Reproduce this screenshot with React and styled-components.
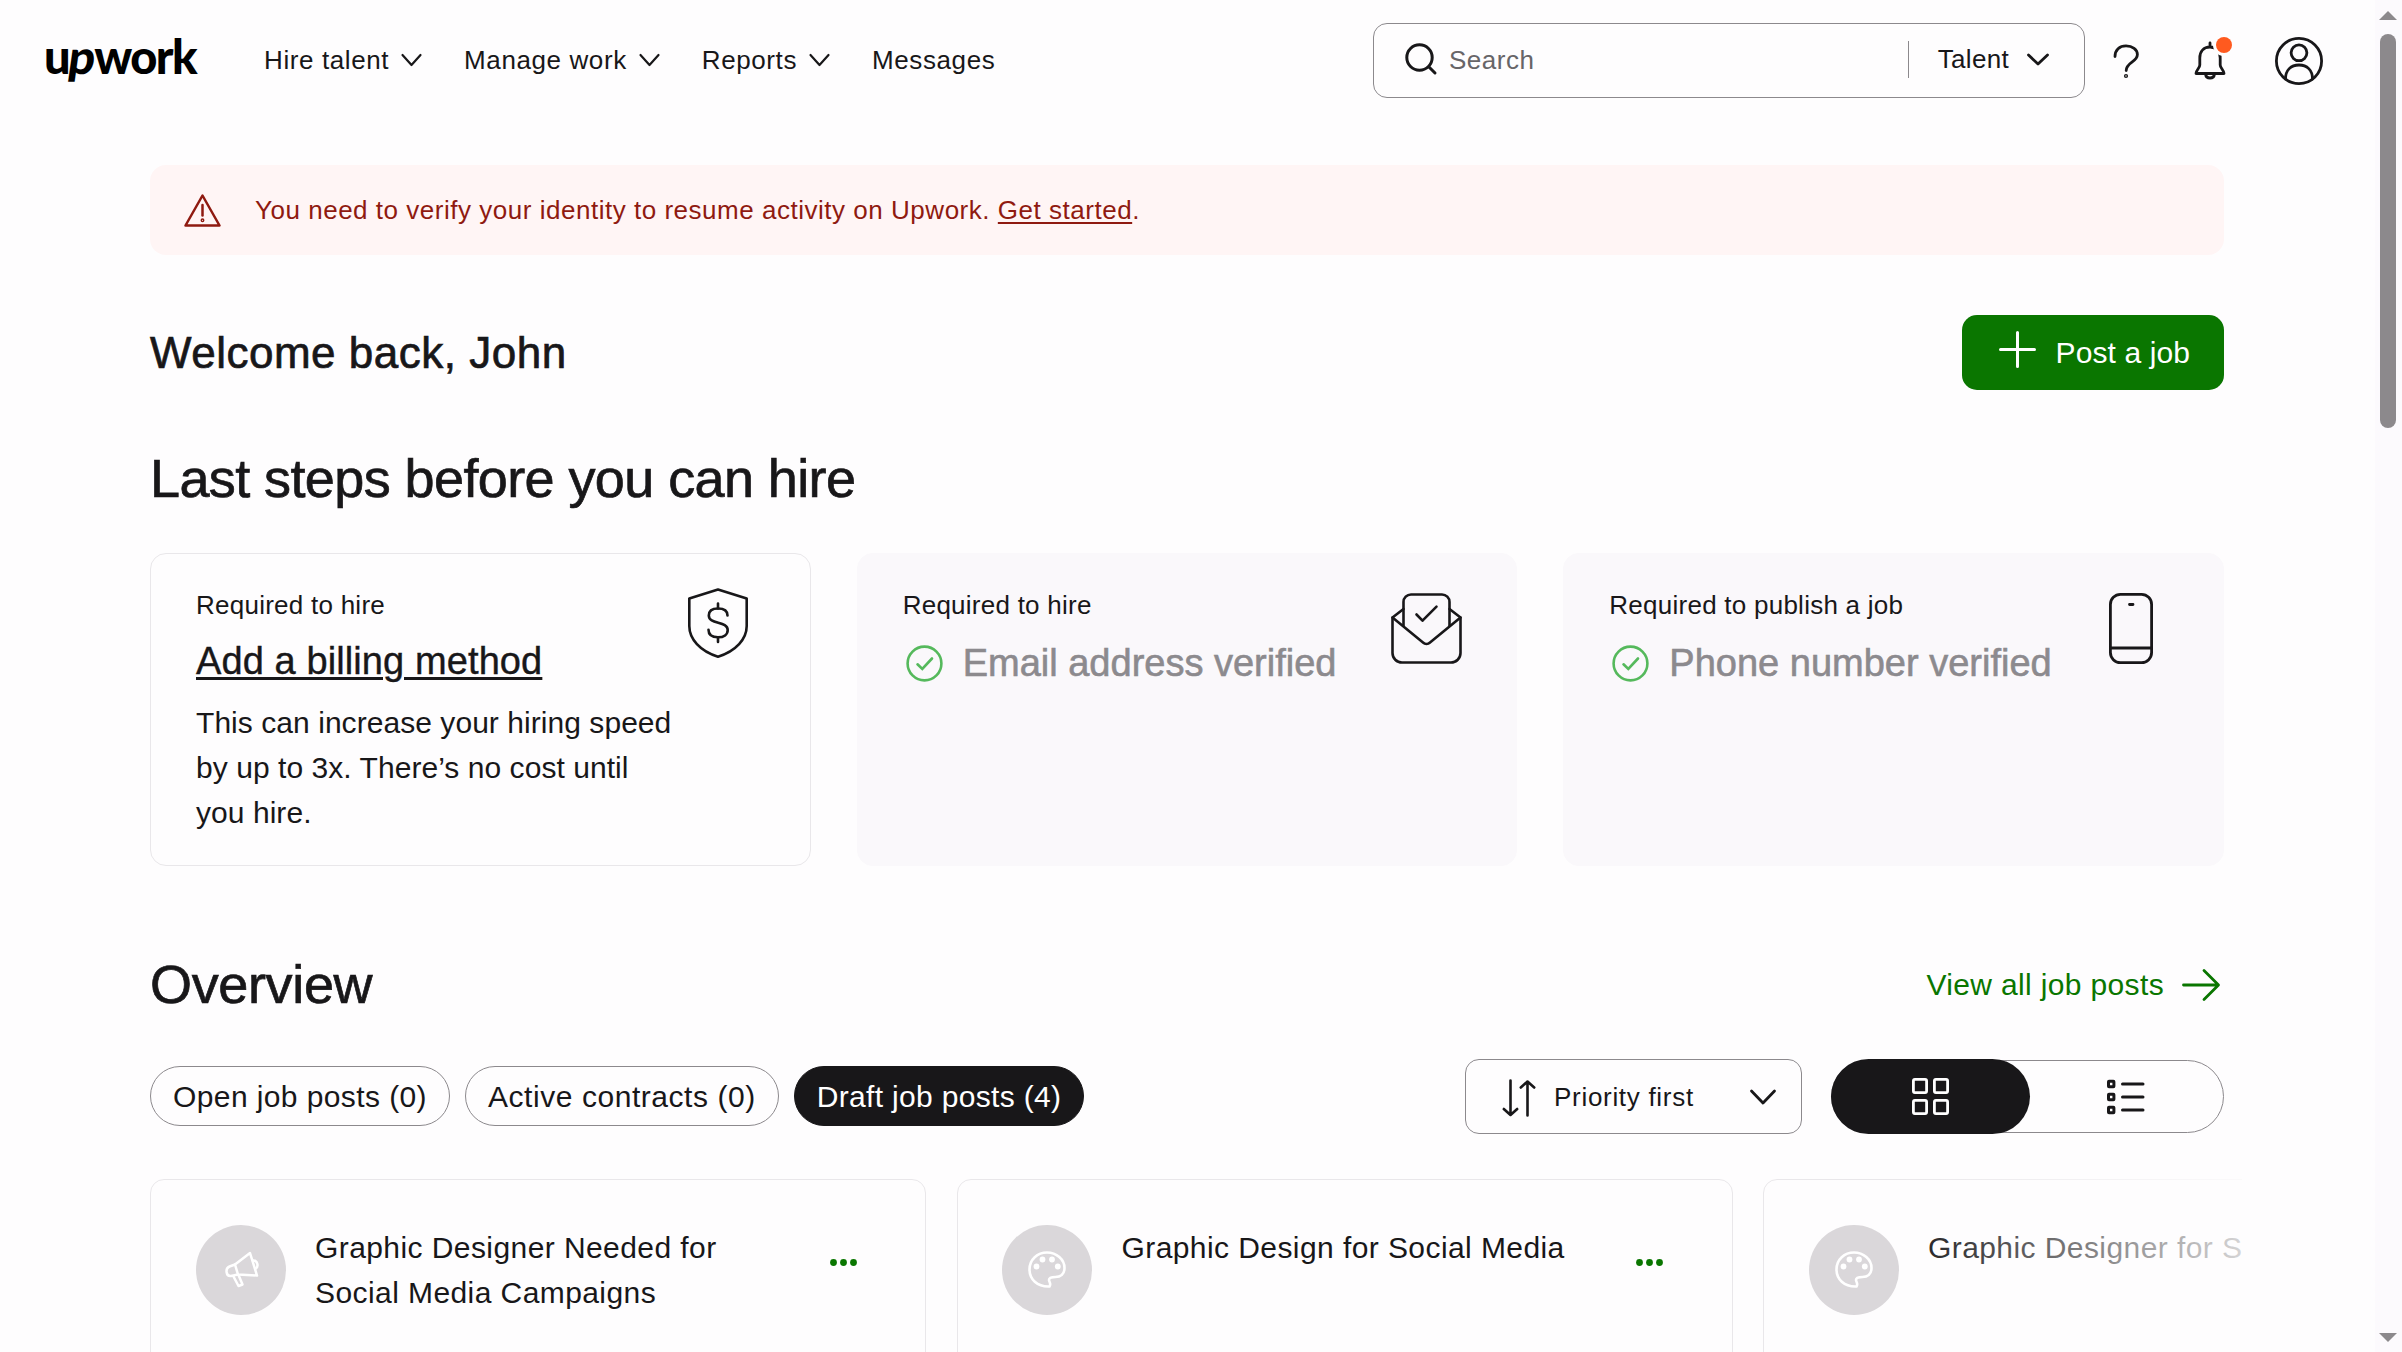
import React from "react"
import styled, { createGlobalStyle, css } from "styled-components"

const ink = "#181719"
const green = "#0a7600"
const red = "#8f1a10"
const line = "#8c898d"
const softLine = "#e9e7ea"

const GlobalStyle = createGlobalStyle`
  * {
    box-sizing: border-box;
  }
  html, body {
    margin: 0;
    height: 1352px;
    overflow: hidden;
  }
  body {
    background: #fefdfe;
    color: ${ink};
    font-family: "Liberation Sans", Arial, sans-serif;
    font-size: 26px;
  }
  button {
    font: inherit;
    color: inherit;
    background: none;
    border: 0;
    padding: 0;
  }
  a {
    color: inherit;
  }
  svg {
    display: block;
    flex: none;
    overflow: visible;
  }
`

const Shell = styled.div`
  display: flex;
  height: 1352px;
  overflow: hidden;
`

const Page = styled.div`
  flex: 1;
  min-width: 0;
`

const ScrollTrack = styled.div`
  width: 27px;
  background: #fcfafd;
  display: flex;
  flex-direction: column;
  align-items: center;
  padding: 11px 1px 10px 0;
`

const ScrollThumb = styled.div`
  width: 16px;
  height: 394px;
  margin-top: 14px;
  margin-bottom: auto;
  border-radius: 8px;
  background: #8c898c;
`

/* Header */

const Header = styled.header`
  height: 121px;
  padding: 0 52px 0 44px;
  display: flex;
  align-items: center;
`

const Logo = styled.a`
  width: 220px;
  height: 62px;
  font-family: Lato, "Liberation Sans", sans-serif;
  font-weight: 900;
  font-size: 47px;
  line-height: 53px;
  letter-spacing: -1.6px;
  color: #000;
  text-decoration: none;
`

const LogoSlant = styled.span`
  display: inline-block;
  transform: skewX(-8deg);
`

const Nav = styled.nav`
  display: flex;
  align-items: center;
  gap: 42px;
  padding-bottom: 2px;
  letter-spacing: 0.6px;
`

const NavItem = styled.div`
  display: flex;
  align-items: center;
  gap: 12px;
  line-height: 40px;
`

const SearchBox = styled.div`
  width: 712px;
  height: 75px;
  margin-left: auto;
  padding: 0 35px 0 31px;
  border: 1.5px solid ${line};
  border-radius: 14px;
  display: flex;
  align-items: center;

  > svg {
    margin-bottom: 3px;
  }
`

const SearchHint = styled.span`
  flex: 1;
  padding-left: 12px;
  color: #676568;
  letter-spacing: 0.5px;
`

const SearchScope = styled.div`
  height: 37px;
  margin-bottom: 3px;
  padding-left: 29px;
  border-left: 1.5px solid ${line};
  display: flex;
  align-items: center;
  gap: 18px;
  letter-spacing: 0.3px;
`

const HeaderIcons = styled.div`
  display: flex;
  align-items: center;
  padding-left: 28px;
`

const BellWrap = styled.div`
  position: relative;
  margin: 0 49px 0 55px;
`

const Badge = styled.span`
  position: absolute;
  top: -6px;
  right: -6px;
  width: 16px;
  height: 16px;
  border-radius: 50%;
  background: #ff5a1f;
  box-shadow: 0 0 0 3px #fefdfe;
`

/* Main column */

const Main = styled.main`
  padding: 44px 151px 0 150px;
`

const Alert = styled.div`
  height: 90px;
  padding-left: 34px;
  border-radius: 16px;
  background: #fff5f5;
  color: ${red};
  display: flex;
  align-items: center;
  gap: 34px;
  letter-spacing: 0.52px;

  a {
    text-decoration-thickness: 2px;
    text-underline-offset: 3px;
  }
`

const SplitRow = styled.div`
  display: flex;
  align-items: center;
  justify-content: space-between;
  margin-top: ${({ $top }) => $top}px;
`

const Welcome = styled.h1`
  margin: 0;
  font-size: 44px;
  font-weight: 400;
  letter-spacing: 0.5px;
  -webkit-text-stroke: 0.7px currentColor;
`

const PostButton = styled.button`
  height: 75px;
  padding: 0 34px 0 37px;
  border-radius: 15px;
  background: ${green};
  color: #fff;
  font-size: 30px;
  letter-spacing: 0.1px;
  display: flex;
  align-items: center;
  gap: 20px;

  svg {
    margin-bottom: 6px;
  }
`

const SectionTitle = styled.h2`
  margin: 0;
  font-size: 54px;
  font-weight: 400;
  line-height: 60px;
  letter-spacing: ${({ $tracking = 0 }) => $tracking}px;
  -webkit-text-stroke: 0.7px currentColor;
`

const StepsTitle = styled(SectionTitle)`
  margin-top: 58px;
`

const Steps = styled.div`
  margin-top: 45px;
  display: grid;
  grid-template-columns: repeat(3, minmax(0, 1fr));
  gap: 46px;
`

const Step = styled.section`
  height: 313px;
  padding: 32px 46px 0 45px;
  border: 1.5px solid ${softLine};
  border-radius: 16px;
  display: flex;
  justify-content: space-between;

  ${({ $done }) =>
    $done &&
    css`
      background: #faf8fb;
      border-color: #faf8fb;
    `}
`

const StepIcon = styled.div`
  width: ${({ $width = 92 }) => $width}px;
  margin-left: -20px;
  padding-top: ${({ $top }) => $top}px;
  flex: none;
  display: flex;
  justify-content: center;
  align-items: flex-start;
`

const StepBody = styled.div`
  white-space: nowrap;
`

const StepCaption = styled.div`
  line-height: 39px;
  letter-spacing: 0.25px;
`

const StepLink = styled.a`
  display: block;
  margin-top: 12px;
  font-size: 38px;
  line-height: 48px;
  letter-spacing: 0.1px;
  text-decoration: underline;
  text-decoration-thickness: 3px;
  text-underline-offset: 3px;
  -webkit-text-stroke: 0.4px currentColor;
`

const StepText = styled.p`
  width: 480px;
  margin: 15px 0 0;
  font-size: 30px;
  line-height: 45px;
  letter-spacing: 0.05px;
  white-space: normal;
`

const StepDone = styled.div`
  margin: 14px 0 0 3px;
  font-size: 38px;
  line-height: 48px;
  color: #8c8a8e;
  display: flex;
  align-items: center;
  gap: 20px;
  -webkit-text-stroke: 0.6px currentColor;
`

const ViewAll = styled.a`
  display: flex;
  align-items: center;
  gap: 18px;
  padding: 2px 4px 0 0;
  color: ${green};
  font-size: 30px;
  letter-spacing: 0.35px;
`

const Filters = styled.div`
  display: flex;
  gap: 15px;
  margin-bottom: 1px;
`

const Pill = styled.button`
  height: 60px;
  padding: 1px 22px 0;
  border: 1.5px solid ${line};
  border-radius: 30px;
  font-size: 30px;
  letter-spacing: ${({ $tracking }) => $tracking}px;

  ${({ $active }) =>
    $active &&
    css`
      background: ${ink};
      border-color: ${ink};
      color: #fff;
    `}
`

const Controls = styled.div`
  display: flex;
  align-items: center;
  gap: 29px;
`

const SortSelect = styled.div`
  width: 337px;
  height: 75px;
  padding: 0 25px 0 36px;
  border: 1.5px solid ${line};
  border-radius: 14px;
  display: flex;
  align-items: center;
  letter-spacing: 0.7px;
`

const SortLabel = styled.span`
  flex: 1;
  padding: 1px 0 0 18px;
`

const Toggle = styled.div`
  width: 393px;
  height: 73px;
  border: 1.5px solid ${line};
  border-radius: 37px;
  display: flex;
  align-items: center;
`

const ToggleSide = styled.div`
  flex: 1;
  height: 75px;
  display: flex;
  align-items: center;
  justify-content: center;

  ${({ $active }) =>
    $active &&
    css`
      flex: none;
      width: 199px;
      margin-left: -1.5px;
      border-radius: 38px;
      background: ${ink};
      color: #fff;
    `}
`

const Jobs = styled.div`
  position: relative;
  margin: 45px -18px 0 0;
  height: 173px;
  overflow: hidden;
  display: flex;
  gap: 30.5px;
`

const JobsFade = styled.div`
  position: absolute;
  top: 0;
  right: 0;
  width: 347px;
  height: 100%;
  background: linear-gradient(
    to right,
    rgba(254, 253, 254, 0),
    rgba(254, 253, 254, 0.82)
  );
`

const JobCard = styled.article`
  flex: none;
  width: 776px;
  height: 300px;
  padding: 44.5px;
  border: 1.5px solid ${softLine};
  border-radius: 14px;
  display: flex;
  align-items: flex-start;
`

const JobIcon = styled.div`
  width: 90px;
  height: 90px;
  flex: none;
  border-radius: 50%;
  background: #dad7da;
  color: #fff;
  display: flex;
  align-items: center;
  justify-content: center;
`

const JobTitle = styled.div`
  max-width: 470px;
  margin-left: 29.5px;
  font-size: 30px;
  line-height: 45px;
  letter-spacing: 0.42px;
`

const MoreButton = styled.button`
  margin: 34px 24px 0 auto;
  color: ${green};
`

/* Icons */

const Stroke = ({ w, h, size = 2.6, children }) => (
  <svg
    width={w}
    height={h}
    viewBox={`0 0 ${w} ${h}`}
    fill="none"
    stroke="currentColor"
    strokeWidth={size}
    strokeLinecap="round"
    strokeLinejoin="round"
  >
    {children}
  </svg>
)

const Chevron = ({ w = 22, h = 12, size = 2.2 }) => (
  <Stroke w={w} h={h} size={size}>
    <path d={`M1.500 1 L${w / 2} ${h - 1} L${w - 1.5} 1`} />
  </Stroke>
)

const SearchIcon = () => (
  <Stroke w={32} h={32} size={3}>
    <circle cx="14.500" cy="14.500" r="12.700" />
    <path d="M24 24l6 6" />
  </Stroke>
)

const HelpIcon = () => (
  <Stroke w={26} h={34} size={2.8}>
    <path d="M2 12.500C2 6 6.500 1.900 13 1.900S24.400 5.500 24.400 10.500C24.400 18 13.200 18.500 13.200 26.500" />
    <circle cx="13" cy="32" r="0.700" />
  </Stroke>
)

const BellIcon = () => (
  <Stroke w={32} h={36} size={2.8}>
    <path d="M16 0v3M16 4C9.500 4 5.800 8.500 5.800 15v7c0 3-3.300 4.500-3.800 8.500h28c-.5-4-3.800-5.500-3.800-8.500v-7C26.200 8.500 22.500 4 16 4z" />
    <path d="M11.500 31c.3 2.500 2 4 4.500 4s4.200-1.500 4.500-4" />
  </Stroke>
)

const AvatarIcon = () => (
  <Stroke w={48} h={48} size={2.8}>
    <circle cx="24" cy="24" r="22.600" />
    <circle cx="24" cy="15.800" r="7.900" />
    <path d="M10.500 42c0-9 5.500-14 13.500-14S37.500 33 37.500 42" />
  </Stroke>
)

const WarningIcon = () => (
  <Stroke w={37} h={34} size={2.5}>
    <path d="M18.500 2.500L35.500 32.500H1.500z" />
    <path d="M18.500 12v10.500" />
    <circle cx="18.500" cy="27.200" r="0.700" />
  </Stroke>
)

const PlusIcon = () => (
  <Stroke w={37} h={37} size={3}>
    <path d="M18.500 1.500v34M1.500 18.500h34" />
  </Stroke>
)

const ShieldIcon = () => (
  <Stroke w={60} h={70}>
    <path d="M30 1.500L58.700 10.500V38C58.700 51 48 63 30 68.700C12 63 1.300 51 1.300 38V10.500z" />
    <path d="M39.500 27.500C39.500 23 36 20.500 30 20.500S20.800 23.200 20.800 27.600C20.800 37 39.700 32.500 39.700 42C39.700 46.500 36 49.300 30 49.300S20.500 46.500 20.500 41.800" />
    <path d="M30 15.500v5M30 49.500v4.500" />
  </Stroke>
)

const MailIcon = () => (
  <Stroke w={71} h={71}>
    <path d="M12.500 33V9a7.500 7.500 0 0 1 7.500-7.500h31A7.500 7.500 0 0 1 58.500 9v24" />
    <path d="M12.500 16L1.500 24.500V60A9.500 9.500 0 0 0 11 69.500h49a9.500 9.500 0 0 0 9.500-9.500V24.500L58.500 16" />
    <path d="M1.500 24.500l30.500 25a5 5 0 0 0 7 0l30.500-25" />
    <path d="M25.500 21.500l6 6.200 14-14" />
  </Stroke>
)

const PhoneIcon = () => (
  <Stroke w={44} h={71} size={2.8}>
    <rect x="1.400" y="1.400" width="41.200" height="68.200" rx="10" />
    <path d="M1.400 55h41.200M20.500 11.500h3.500" />
  </Stroke>
)

const CheckIcon = () => (
  <svg width="37" height="37" viewBox="0 0 37 37" fill="none" stroke="#55b95c" strokeWidth="2.6">
    <circle cx="18.500" cy="18.500" r="16.900" />
    <path d="M11.500 19.300l4.800 4.700 9.700-10.500" strokeLinecap="round" />
  </svg>
)

const ArrowIcon = () => (
  <Stroke w={38} h={32} size={2.8}>
    <path d="M1.500 16h34.500M22 1.500l14.500 14.500L22 30.500" />
  </Stroke>
)

const SortIcon = () => (
  <Stroke w={34} h={33} size={2.6}>
    <path d="M8.500 0.500v34M1.800 29l6.700 6 6.700-6" />
    <path d="M25.500 35.500V1.500M18.800 7.500l6.700-6 6.700 6" />
  </Stroke>
)

const GridIcon = () => (
  <Stroke w={37} h={37} size={2.8}>
    <rect x="1.400" y="1.400" width="13.200" height="13.200" rx="1.500" />
    <rect x="22.400" y="1.400" width="13.200" height="13.200" rx="1.500" />
    <rect x="1.400" y="22.400" width="13.200" height="13.200" rx="1.500" />
    <rect x="22.400" y="22.400" width="13.200" height="13.200" rx="1.500" />
  </Stroke>
)

const ListIcon = () => (
  <Stroke w={38} h={36} size={3}>
    {[5, 18, 31].map(y => (
      <React.Fragment key={y}>
        <rect x="1.500" y={y - 2.7} width="5.400" height="5.400" rx="0.500" />
        <path d={`M15.500 ${y}h20.500`} />
      </React.Fragment>
    ))}
  </Stroke>
)

const MegaphoneIcon = () => (
  <Stroke w={34} h={37} size={2.5}>
    <path d="M26 2L33 24.500L14 23.500L11 13.500z" />
    <path d="M11 13.500L5.500 15.500C.8 17.500 2 25.500 7 25L14 23.500" />
    <path d="M9.500 25.500l5 9.500 4-1.500-4-9.500" />
    <path d="M28.800 9.500c4.500-.5 6.500 6 2.500 8.500" />
  </Stroke>
)

const PaletteIcon = () => (
  <Stroke w={38} h={37} size={2.6}>
    <path d="M21.500 35.500C9 36 1.500 28 1.500 18.500C1.500 8.500 9.500 1.500 19 1.500S36.500 8.500 36.500 17c0 6-4 9-9 9c-4 0-6.500.5-6.500 3c0 2 2.500 3.500 .5 6.500z" />
    <g fill="currentColor" stroke="none">
      <circle cx="8.500" cy="15.500" r="2.900" />
      <circle cx="14.500" cy="8.500" r="2.900" />
      <circle cx="24" cy="8.500" r="2.900" />
      <circle cx="29.800" cy="15.500" r="2.900" />
    </g>
  </Stroke>
)

const DotsIcon = () => (
  <svg width="27" height="7" viewBox="0 0 27 7" fill="currentColor">
    <circle cx="3.500" cy="3.500" r="3.400" />
    <circle cx="13.500" cy="3.500" r="3.400" />
    <circle cx="23.500" cy="3.500" r="3.400" />
  </svg>
)

const Caret = ({ down }) => (
  <svg width="18" height="9" viewBox="0 0 18 9" fill="#8c898c">
    <path d={down ? "M0 0h18L9 9z" : "M0 9h18L9 0z"} />
  </svg>
)

const navItems = [
  { label: "Hire talent", menu: true },
  { label: "Manage work", menu: true },
  { label: "Reports", menu: true },
  { label: "Messages" },
]

const filters = [
  { label: "Open job posts (0)", tracking: 0.4 },
  { label: "Active contracts (0)", tracking: 0.55 },
  { label: "Draft job posts (4)", tracking: 0.33, active: true },
]

const jobs = [
  { title: "Graphic Designer Needed for Social Media Campaigns", icon: <MegaphoneIcon /> },
  { title: "Graphic Design for Social Media", icon: <PaletteIcon /> },
  { title: "Graphic Designer for S", icon: <PaletteIcon /> },
]

const TopBar = () => (
  <Header>
    <Logo>
      u<LogoSlant>p</LogoSlant>work
    </Logo>
    <Nav>
      {navItems.map(({ label, menu }) => (
        <NavItem key={label}>
          {label}
          {menu && <Chevron w={21} />}
        </NavItem>
      ))}
    </Nav>
    <SearchBox>
      <SearchIcon />
      <SearchHint>Search</SearchHint>
      <SearchScope>
        Talent
        <Chevron h={11} size={2.8} />
      </SearchScope>
    </SearchBox>
    <HeaderIcons>
      <HelpIcon />
      <BellWrap>
        <BellIcon />
        <Badge />
      </BellWrap>
      <AvatarIcon />
    </HeaderIcons>
  </Header>
)

const App = () => {
  return (
    <Shell>
      <GlobalStyle />
      <Page>
        <TopBar />
        <Main>
          <Alert>
            <WarningIcon />
            <span>
              You need to verify your identity to resume activity on Upwork.{" "}
              <a href="#verify">Get started</a>.
            </span>
          </Alert>
          <SplitRow $top={60}>
            <Welcome>Welcome back, John</Welcome>
            <PostButton>
              <PlusIcon />
              Post a job
            </PostButton>
          </SplitRow>

          <StepsTitle $tracking={-0.6}>Last steps before you can hire</StepsTitle>
          <Steps>
            <Step>
              <StepBody>
                <StepCaption>Required to hire</StepCaption>
                <StepLink>Add a billing method</StepLink>
                <StepText>
                  This can increase your hiring speed by up to 3x. There’s no
                  cost until you hire.
                </StepText>
              </StepBody>
              <StepIcon $top={2}>
                <ShieldIcon />
              </StepIcon>
            </Step>
            <Step $done>
              <StepBody>
                <StepCaption>Required to hire</StepCaption>
                <StepDone>
                  <CheckIcon />
                  Email address verified
                </StepDone>
              </StepBody>
              <StepIcon $top={7} $width={88}>
                <MailIcon />
              </StepIcon>
            </Step>
            <Step $done>
              <StepBody>
                <StepCaption>Required to publish a job</StepCaption>
                <StepDone>
                  <CheckIcon />
                  Phone number verified
                </StepDone>
              </StepBody>
              <StepIcon $top={7}>
                <PhoneIcon />
              </StepIcon>
            </Step>
          </Steps>

          <SplitRow $top={88}>
            <SectionTitle $tracking={-0.35}>Overview</SectionTitle>
            <ViewAll>
              View all job posts
              <ArrowIcon />
            </ViewAll>
          </SplitRow>
          <SplitRow $top={45}>
            <Filters>
              {filters.map(({ label, tracking, active }) => (
                <Pill key={label} $tracking={tracking} $active={active}>
                  {label}
                </Pill>
              ))}
            </Filters>
            <Controls>
              <SortSelect>
                <SortIcon />
                <SortLabel>Priority first</SortLabel>
                <Chevron w={26} h={14} size={2.8} />
              </SortSelect>
              <Toggle>
                <ToggleSide $active>
                  <GridIcon />
                </ToggleSide>
                <ToggleSide>
                  <ListIcon />
                </ToggleSide>
              </Toggle>
            </Controls>
          </SplitRow>

          <Jobs>
            {jobs.map(({ title, icon }) => (
              <JobCard key={title}>
                <JobIcon>{icon}</JobIcon>
                <JobTitle>{title}</JobTitle>
                <MoreButton>
                  <DotsIcon />
                </MoreButton>
              </JobCard>
            ))}
            <JobsFade />
          </Jobs>
        </Main>
      </Page>
      <ScrollTrack>
        <Caret />
        <ScrollThumb />
        <Caret down />
      </ScrollTrack>
    </Shell>
  )
}

export default App
